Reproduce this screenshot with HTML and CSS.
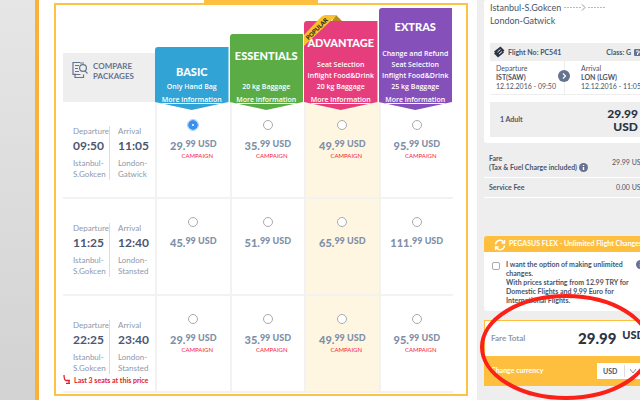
FILE: index.html
```html
<!DOCTYPE html>
<html lang="en">

<head>
    <meta charset="UTF-8">
    <meta name="viewport" content="width=device-width, initial-scale=1.0">
    <title>Select Flight</title>
    <link rel="stylesheet" href="styles.css">
</head>

<body>

    <div class="page">
        <main class="main">
            <div class="panel">
                <div class="tab"></div>

                <table class="flights">
                    <thead>
                        <tr>
                            <th class="route-col">
                                <div class="compare">
                                    <svg width="18" height="18" viewBox="0 0 18 18" fill="none" stroke="#66738f" stroke-width="1.2">
                                        <path d="M9 1.500H2V13.500H9.500M4 12.500V16.500H12.500V13.500M4 4.500H8M4 7.500H7M4 10.500H8" />
                                        <circle cx="12" cy="7" r="3.400" />
                                        <path d="M14 9.800L16.500 12.500M13 2H9" />
                                    </svg>
                                    <span>COMPARE<br>PACKAGES</span>
                                </div>
                            </th>
                            <th>
                                <div class="package basic">
                                    <h2>BASIC</h2>
                                    <p>Only Hand Bag</p>
                                    <a href="#">More information</a>
                                </div>
                            </th>
                            <th>
                                <div class="package essentials">
                                    <h2>ESSENTIALS</h2>
                                    <p>20 kg Baggage</p>
                                    <a href="#">More information</a>
                                </div>
                            </th>
                            <th>
                                <div class="package-wrap">
                                    <div class="package advantage">
                                        <h2>ADVANTAGE</h2>
                                        <p>Seat Selection<br>Inflight Food&amp;Drink<br>20 kg Baggage</p>
                                        <a href="#">More information</a>
                                    </div>
                                    <svg class="popular" width="38" height="32" viewBox="0 0 38 32">
                                        <path d="M32 1L38 7H28Z" fill="#b98a1c" />
                                        <path d="M0 21L17 3Q19 1 22 1H33L0 32Z" fill="#fbc02f" />
                                        <text x="13" y="17" transform="rotate(-45 13 15)" text-anchor="middle">POPULAR</text>
                                    </svg>
                                </div>
                            </th>
                            <th>
                                <div class="package extras">
                                    <h2>EXTRAS</h2>
                                    <p>Change and Refund<br>Seat Selection<br>Inflight Food&amp;Drink<br>25 kg Baggage</p>
                                    <a href="#">More information</a>
                                </div>
                            </th>
                        </tr>
                    </thead>
                    <tbody>
                        <tr>
                            <td>
                                <div class="route">
                                    <div>Departure<b>09:50</b>Istanbul-<br>S.Gokcen</div>
                                    <div>Arrival<b>11:05</b>London-<br>Gatwick</div>
                                </div>
                            </td>
                            <td><label class="fare"><input type="radio" name="fare" checked><span class="price">29.<sup>99 USD</sup></span><em>CAMPAIGN</em></label></td>
                            <td><label class="fare"><input type="radio" name="fare"><span class="price">35.<sup>99 USD</sup></span><em>CAMPAIGN</em></label></td>
                            <td class="highlight"><label class="fare"><input type="radio" name="fare"><span class="price">49.<sup>99 USD</sup></span><em>CAMPAIGN</em></label></td>
                            <td><label class="fare"><input type="radio" name="fare"><span class="price">95.<sup>99 USD</sup></span><em>CAMPAIGN</em></label></td>
                        </tr>
                        <tr>
                            <td>
                                <div class="route">
                                    <div>Departure<b>11:25</b>Istanbul-<br>S.Gokcen</div>
                                    <div>Arrival<b>12:40</b>London-<br>Stansted</div>
                                </div>
                            </td>
                            <td><label class="fare"><input type="radio" name="fare"><span class="price">45.<sup>99 USD</sup></span></label></td>
                            <td><label class="fare"><input type="radio" name="fare"><span class="price">51.<sup>99 USD</sup></span></label></td>
                            <td class="highlight"><label class="fare"><input type="radio" name="fare"><span class="price">65.<sup>99 USD</sup></span></label></td>
                            <td><label class="fare"><input type="radio" name="fare"><span class="price">111.<sup>99 USD</sup></span></label></td>
                        </tr>
                        <tr>
                            <td>
                                <div class="route">
                                    <div>Departure<b>22:25</b>Istanbul-<br>S.Gokcen</div>
                                    <div>Arrival<b>23:40</b>London-<br>Stansted</div>
                                </div>
                                <div class="last-seats">
                                    <svg width="8" height="9" viewBox="0 0 8 9" fill="none" stroke="#e3202b" stroke-width="1.300">
                                        <path d="M1 0Q1 5 3 5.500H7M3 8.300H7M6 5.500V8" />
                                    </svg>
                                    Last 3 seats at this price
                                </div>
                            </td>
                            <td><label class="fare"><input type="radio" name="fare"><span class="price">29.<sup>99 USD</sup></span><em>CAMPAIGN</em></label></td>
                            <td><label class="fare"><input type="radio" name="fare"><span class="price">35.<sup>99 USD</sup></span><em>CAMPAIGN</em></label></td>
                            <td class="highlight"><label class="fare"><input type="radio" name="fare"><span class="price">49.<sup>99 USD</sup></span><em>CAMPAIGN</em></label></td>
                            <td><label class="fare"><input type="radio" name="fare"><span class="price">95.<sup>99 USD</sup></span><em>CAMPAIGN</em></label></td>
                        </tr>
                    </tbody>
                </table>
            </div>
        </main>

        <aside class="summary">
            <section class="card trip">
                <div class="trip-route">
                    Istanbul-S.Gokcen
                    <svg width="42" height="8" viewBox="0 0 42 8" fill="none" stroke="#b4bac4">
                        <path d="M0 4.500H17M24 4.500H41" stroke-dasharray="2 1" />
                        <path d="M18 1.500L21 4.500L18 7.500" stroke="#8d96a5" />
                    </svg>
                    <br>London-Gatwick
                </div>

                <div class="flight-bar">
                    <svg width="12" height="12" viewBox="0 0 12 12">
                        <path d="M7.500 0.500L11.500 4.500L10.300 5.500L11 6.500L5 11.500L1 7.500L2 6.500L1 5.500Z" fill="#2c3444" />
                        <path d="M4.500 6L7.500 3.500M6 8L9 5.500" stroke="#eee" />
                    </svg>
                    <span>Flight No: PC541</span>
                    <span class="flight-class">Class: G</span>
                    <svg width="7" height="7" viewBox="0 0 7 7">
                        <rect width="7" height="7" rx="1" fill="#66738f" />
                        <path d="M2 2H5V4H3.500V6" stroke="#fff" fill="none" />
                    </svg>
                </div>

                <div class="legs">
                    <div class="leg">Departure<b>IST(SAW)</b>12.12.2016 - 09:50</div>
                    <svg class="leg-arrow" width="12" height="12" viewBox="0 0 12 12">
                        <circle cx="6" cy="6" r="6" fill="#66738f" />
                        <path d="M5 3.500L7.500 6L5 8.500" stroke="#fff" stroke-width="1.200" fill="none" />
                    </svg>
                    <div class="leg">Arrival<b>LON (LGW)</b>12.12.2016 - 11:05</div>
                </div>

                <div class="passenger">
                    <span>1 Adult</span>
                    <strong>29.99<br>USD</strong>
                </div>
            </section>

            <div class="fee fee-tall">
                <span>Fare<br>(Tax &amp; Fuel Charge included)</span>
                <svg class="info" width="9" height="9" viewBox="0 0 9 9">
                    <circle cx="4.500" cy="4.500" r="4.500" fill="#66738f" />
                    <path d="M4.500 4V7M4.500 2V3" stroke="#fff" stroke-width="1.400" />
                </svg>
                <span class="amount">29.99 USD</span>
            </div>
            <div class="fee">
                <span>Service Fee</span>
                <span class="amount">0.00 USD</span>
            </div>

            <section class="card flex-offer">
                <div class="flex-title">
                    <svg width="12" height="12" viewBox="0 0 12 12" fill="none" stroke="#fff" stroke-width="1.400">
                        <path d="M1.500 5.500A4.500 4.500 0 0 1 9.500 3M10.500 6.500A4.500 4.500 0 0 1 2.500 9" />
                        <path d="M10.500 1V4H7.500M1.500 11V8H4.500" />
                    </svg>
                    <span>PEGASUS FLEX - Unlimited Flight Changes!</span>
                </div>
                <div class="flex-body">
                    <input type="checkbox" id="flex">
                    <label for="flex">I want the option of making unlimited changes.<br>With prices starting from 12.99 TRY for Domestic Flights and 9.99 Euro for International Flights.</label>
                    <svg class="info" width="9" height="9" viewBox="0 0 9 9">
                        <circle cx="4.500" cy="4.500" r="4.500" fill="#66738f" />
                        <path d="M4.500 4V7M4.500 2V3" stroke="#fff" stroke-width="1.400" />
                    </svg>
                </div>
            </section>

            <section class="total">
                <div class="total-row">
                    <span>Fare Total</span>
                    <strong>29.99</strong>
                    <b>USD</b>
                </div>
                <div class="currency-row">
                    <label for="currency">Change currency</label>
                    <div class="select-box">
                        <select id="currency">
                            <option>USD</option>
                            <option>EUR</option>
                            <option>TRY</option>
                        </select>
                        <svg width="8" height="8" viewBox="0 0 8 8" fill="none" stroke="#8d96a5">
                            <path d="M1 2L4 6L7 2" />
                        </svg>
                    </div>
                </div>
            </section>

            <!-- Hand-drawn marker around the total -->
            <svg class="marker" width="174" height="110" viewBox="0 0 174 110">
                <ellipse cx="87" cy="55" rx="84" ry="51" fill="none" stroke="#fb2018" stroke-width="4" />
            </svg>
        </aside>
    </div>

</body>

</html>
```

FILE: styles.css
```css
* {
    box-sizing: border-box;
}

body {
    margin: 0;
    font-family: Lato, "Open Sans", sans-serif;
    font-size: 8px;
    line-height: 11px;
    color: #4a5568;
    background: linear-gradient(#e6e6e6, #d2d2d2);
    overflow: hidden;
}

.page {
    display: grid;
    grid-template-columns: minmax(0, 1fr) 163px;
    min-height: 100vh;
    margin-left: 35px;
    border-left: 4px solid #fbb03b;
    background-color: #fff;
}

.main {
    padding: 3px 9px 0 15px;
}

.panel {
    position: relative;
    border: 2px solid #fdc345;
    padding: 0 13px 1px 7px;
}

.tab {
    position: absolute;
    top: -5px;
    left: 148px;
    width: 114px;
    height: 5px;
    background-color: #fdc040;
}

/* Flight table */
.flights {
    width: 100%;
    table-layout: fixed;
    border-collapse: separate;
    border-spacing: 0;
}

.flights th,
.flights td {
    padding: 0;
    vertical-align: bottom;
    font-weight: normal;
}

.flights thead tr {
    height: 97px;
}

.flights .route-col {
    width: 92px;
}

.compare {
    display: flex;
    align-items: flex-start;
    gap: 4px;
    height: 49px;
    padding: 8px;
    background-color: #eee;
    color: #66738f;
    font-weight: bold;
    line-height: 10px;
    text-align: left;
}

.package-wrap {
    position: relative;
}

.package {
    position: relative;
    display: flex;
    flex-direction: column;
    align-items: center;
    margin: 0 1px -8px 0;
    padding: 14px 0 5px;
    border-radius: 3px 0 0 0;
    clip-path: polygon(0 0, 100% 0, 100% calc(100% - 8px), 50% 100%, 0 calc(100% - 8px));
    color: #fff;
    font-family: "Open Sans", sans-serif;
    font-size: 7px;
    font-weight: 600;
    white-space: nowrap;
}

.package h2 {
    margin: 0 0 auto;
    font-family: Lato, sans-serif;
    font-size: 11px;
    font-weight: 900;
    line-height: 16px;
}

.package p {
    margin: 0 0 3px;
}

.package a {
    color: #fff;
    line-height: 10px;
}

.basic {
    height: 63px;
    padding-top: 17px;
    background-color: #31a3d5;
}

.essentials {
    height: 76px;
    background-color: #5bac45;
}

.advantage {
    height: 89px;
    background-color: #e63e7c;
}

.extras {
    height: 102px;
    padding-top: 11px;
    background-color: #8550ba;
}

.popular {
    position: absolute;
    top: -7px;
    left: 0;
}

.popular text {
    font-size: 6px;
    font-weight: 900;
    fill: #222;
}

.flights td {
    height: 97px;
    vertical-align: top;
    border-bottom: 2px solid #f2f2f2;
}

.flights td + td {
    border-left: 2px solid #f2f2f2;
}

.flights .highlight {
    background-color: #fff6e1;
}

.route {
    display: grid;
    grid-template-columns: 37px 1fr;
    gap: 8px;
    padding: 24px 0 0 10px;
    color: #8f98aa;
}

.route div:first-child {
    border-right: 1px solid #ddd;
}

.route b {
    display: block;
    margin-bottom: 3px;
    font-size: 12px;
    line-height: 18px;
    color: #4d5672;
}

.last-seats {
    display: flex;
    gap: 3px;
    margin-top: 1px;
    color: #e3202b;
    font-size: 7px;
    font-weight: bold;
    white-space: nowrap;
}

.fare {
    display: flex;
    flex-direction: column;
    align-items: center;
    padding-top: 18px;
}

.fare input {
    appearance: none;
    width: 10px;
    height: 10px;
    margin: 0;
    border: 1px solid #aaa;
    border-radius: 50%;
    background-color: #fff;
}

.fare input:checked {
    border: 4px solid #3b8ff2;
    outline: 1px solid #a9cffa;
}

.price {
    margin-top: 10px;
    font-size: 11px;
    font-weight: 900;
    line-height: 12px;
    color: #7f90a8;
}

.price sup {
    font-size: 9px;
    line-height: 0;
    vertical-align: 3px;
}

.fare em {
    padding-left: 8px;
    font-size: 6px;
    font-style: normal;
    line-height: 7px;
    color: #f5203c;
}

/* Booking summary */
.summary {
    position: relative;
    display: flex;
    flex-direction: column;
    align-items: flex-start;
    padding-left: 7px;
    background-color: #eee;
    overflow: hidden;
    white-space: nowrap;
}

.card {
    width: 164px;
    background-color: #fff;
    border-radius: 3px;
}

.trip {
    padding: 1px 6px 6px;
}

.trip-route {
    height: 42px;
    font-size: 9px;
    line-height: 13px;
}

.flight-bar {
    display: flex;
    align-items: center;
    gap: 3px;
    height: 18px;
    padding: 0 1px 0 3px;
    background-color: #eee;
    font-size: 7px;
    font-weight: bold;
}

.flight-class {
    margin-left: auto;
}

.legs {
    position: relative;
    display: grid;
    grid-template-columns: 74px 1fr;
    border-bottom: 1px solid #eee;
    font-size: 7px;
    line-height: 9px;
}

.leg {
    padding: 3px 0 3px 6px;
}

.leg b {
    display: block;
}

.leg + .leg-arrow + .leg {
    padding-left: 16px;
    border-left: 1px solid #eee;
}

.leg-arrow {
    position: absolute;
    top: 9px;
    left: 68px;
}

.passenger {
    display: flex;
    align-items: center;
    justify-content: space-between;
    height: 35px;
    margin-top: 7px;
    padding: 0 4px 0 10px;
    background-color: #eee;
    font-size: 7px;
    font-weight: bold;
}

.passenger strong {
    font-size: 12px;
    font-weight: 900;
    line-height: 13px;
    text-align: right;
    color: #2c3444;
}

.fee {
    display: flex;
    align-items: center;
    gap: 2px;
    width: 164px;
    height: 20px;
    padding: 0 2px 0 5px;
    border-bottom: 1px solid #fff;
    font-size: 7px;
    font-weight: bold;
    line-height: 9px;
}

.fee-tall {
    height: 35px;
    padding-top: 5px;
}

.fee-tall .info {
    margin-top: 9px;
}

.amount {
    margin-left: auto;
    font-weight: normal;
}

.flex-offer {
    margin-top: 38px;
    overflow: hidden;
}

.flex-title {
    display: flex;
    gap: 3px;
    height: 16px;
    padding: 3px 0 0 10px;
    background-color: #fdbf3d;
    color: #fff;
    font-size: 7px;
    font-weight: bold;
    line-height: 8px;
}

.flex-body {
    display: flex;
    height: 59px;
    padding: 8px 3px 0 8px;
    font-size: 7px;
    font-weight: bold;
    line-height: 9px;
}

.flex-body input {
    appearance: none;
    flex: none;
    width: 8px;
    height: 8px;
    margin: 2px 6px 0 0;
    border: 1px solid #aaa;
    border-radius: 2px;
}

.flex-body label {
    width: 124px;
    white-space: normal;
}

.flex-body .info {
    margin-left: auto;
}

.total {
    width: 164px;
    margin-top: 9px;
    border: 1px solid #fdbf3d;
    background-color: #fff;
}

.total-row {
    display: flex;
    align-items: center;
    height: 35px;
    padding: 0 2px 0 6px;
    color: #8f98aa;
    font-size: 8px;
    font-weight: bold;
}

.total-row strong {
    margin-left: auto;
    color: #2c3444;
    font-size: 15px;
    font-weight: 900;
}

.total-row b {
    margin: 0 0 8px 6px;
    color: #2c3444;
    font-size: 11px;
}

.currency-row {
    display: flex;
    align-items: center;
    justify-content: space-between;
    height: 29px;
    padding: 0 4px 0 6px;
    background-color: #fdbf3d;
    color: #fff;
    font-size: 7px;
    font-weight: bold;
}

.select-box {
    display: flex;
    align-items: center;
    height: 16px;
    width: 46px;
    background-color: #fff;
}

.select-box select {
    appearance: none;
    width: 28px;
    height: 12px;
    margin-right: 4px;
    padding: 0 0 0 6px;
    border: 0;
    border-right: 1px solid #ddd;
    background-color: #fff;
    color: #4a5568;
    font-family: inherit;
    font-size: 7px;
    font-weight: bold;
}

.marker {
    position: absolute;
    top: 292px;
    left: 2px;
}
```
